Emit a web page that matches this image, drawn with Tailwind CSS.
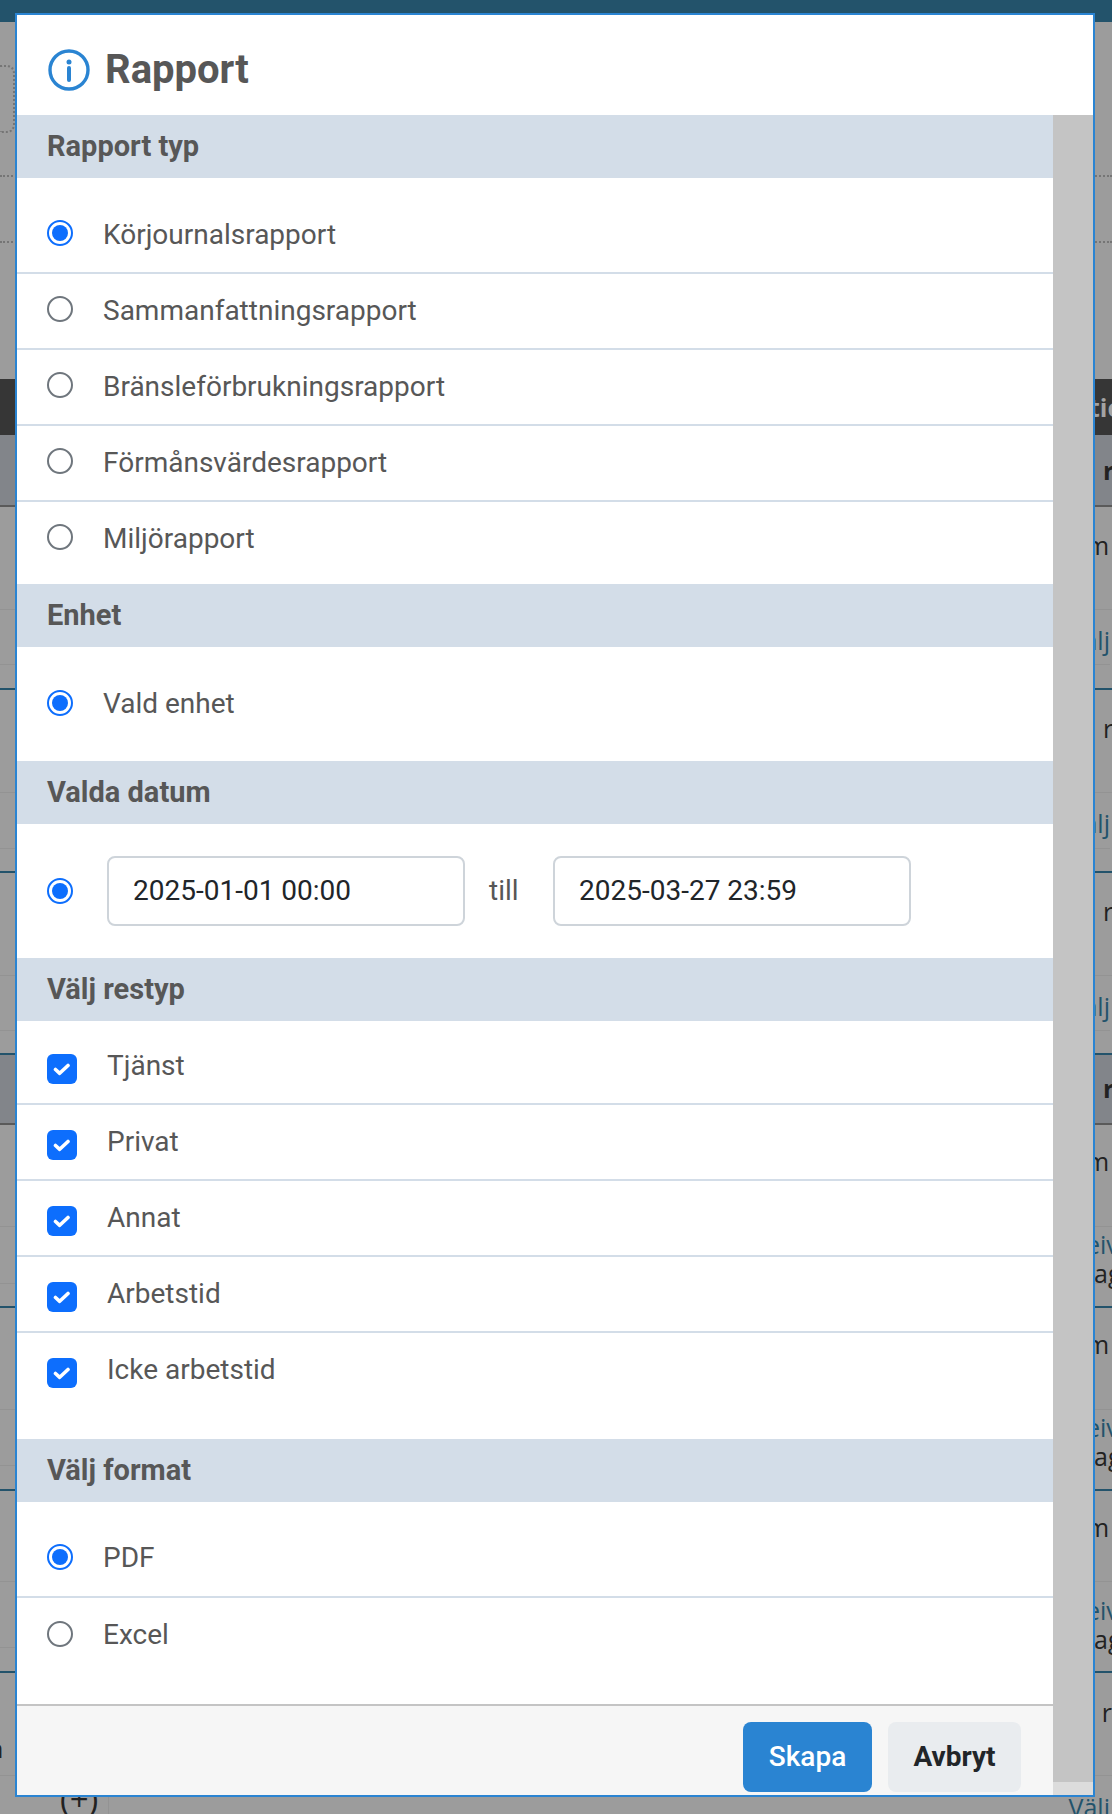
<!DOCTYPE html>
<html lang="sv">
<head>
    <meta charset="UTF-8">
    <meta name="viewport" content="width=device-width, initial-scale=1.0">
    <title>Rapport</title>
    <script src="https://cdn.jsdelivr.net/npm/@tailwindcss/browser@4"></script>
</head>
<body class="bg-[#9c9c9c]">
<div class="relative w-[1112px] h-[1814px] overflow-hidden font-['Roboto',sans-serif]">

    <!-- sidan bakom dialogen -->
    <div class="font-['Open_Sans',sans-serif] text-[25px] leading-[30px] text-[#222] whitespace-nowrap">
        <div class="h-[22px] bg-[#23536b]"></div>
        <div class="h-[155px] pt-[43px] border-b-2 border-dotted border-[#757575]">
            <div class="h-[68px] w-[15px] rounded-r-lg border-2 border-l-0 border-dotted border-[#757575]"></div>
        </div>
        <div class="h-[66px] border-b-2 border-dotted border-[#757575]"></div>
        <div class="h-[136px]"></div>
        <div class="h-[56px] bg-[#363636] pl-[1089px] pt-[13px] font-bold text-[#a3a3a3]">tic</div>
        <div class="h-[72px] bg-[#82858a] border-b-2 border-[#5a5a5a] pl-[1103px] pt-[20px] font-bold">r</div>

        <div class="h-[183px] border-b-2 border-[#23536b]">
            <div class="h-[103px] border-b border-[#939393] pl-[1086px] pt-[23px]">m</div>
            <div class="h-[55px] border-b border-[#939393] w-[1110px] text-right pt-[15px] text-[#23536b]">Välj</div>
        </div>
        <div class="h-[183px] border-b-2 border-[#23536b]">
            <div class="h-[103px] border-b border-[#939393] pl-[1103px] pt-[23px]">r</div>
            <div class="h-[56px] border-b border-[#939393] w-[1110px] text-right pt-[15px] text-[#23536b]">Välj</div>
        </div>
        <div class="h-[182px] border-b-2 border-[#23536b]">
            <div class="h-[103px] border-b border-[#939393] pl-[1103px] pt-[23px]">r</div>
            <div class="h-[55px] border-b border-[#939393] w-[1110px] text-right pt-[15px] text-[#23536b]">Välj</div>
        </div>
        <div class="h-[70px] bg-[#82858a] border-b-2 border-[#5a5a5a] pl-[1103px] pt-[18px] font-bold">r</div>

        <div class="h-[183px] border-b-2 border-[#23536b]">
            <div class="h-[102px] border-b border-[#939393] pl-[1086px] pt-[21px]">m</div>
            <div class="h-[57px] border-b border-[#939393] pl-[1086px] pt-[3px] leading-[29px]"><div class="text-[#23536b]">eiv</div><div class="pl-[8px]">ag</div></div>
        </div>
        <div class="h-[183px] border-b-2 border-[#23536b]">
            <div class="h-[102px] border-b border-[#939393] pl-[1086px] pt-[21px]">m</div>
            <div class="h-[56px] border-b border-[#939393] pl-[1086px] pt-[3px] leading-[29px]"><div class="text-[#23536b]">eiv</div><div class="pl-[8px]">ag</div></div>
        </div>
        <div class="h-[182px] border-b-2 border-[#23536b]">
            <div class="h-[91px] border-b border-[#939393] pl-[1086px] pt-[21px]">m</div>
            <div class="h-[66px] border-b border-[#939393] pl-[1086px] pt-[14px] leading-[29px]"><div class="text-[#23536b]">eiv</div><div class="pl-[8px]">ag</div></div>
        </div>
        <div class="h-[103px] border-b border-[#939393] pl-[1103px] pt-[24px]">
            <div class="flex justify-between">
                <span class="-ml-[1115px] mt-[36px]">n</span>
                <span>r</span>
            </div>
        </div>
        <div class="flex items-start w-[1110px] justify-between">
            <div class="w-[109px] h-[40px] border-r border-[#939393] pl-[60px] pt-[8px] text-[33px]">(+)</div>
            <div class="pt-[16px] text-[#23536b]">Välj</div>
        </div>
    </div>

    <!-- dialog -->
    <div class="absolute left-[15px] top-[13px] w-[1080px] h-[1784px] border-2 border-[#2a84d2] bg-white flex flex-col text-[#575757]">
        <div class="h-[100px] shrink-0 flex items-center pl-[31px] pt-[10px]">
            <svg width="42" height="42" viewBox="0 0 42 42" fill="none" stroke="#2a84d2" stroke-width="3.4">
                <circle cx="21" cy="21" r="19"/>
                <circle cx="21" cy="13" r="2.5" fill="#2a84d2" stroke="none"/>
                <path d="M21 19v12" stroke-width="4" stroke-linecap="round"/>
            </svg>
            <h1 class="ml-[15px] text-[40px] font-bold leading-none">Rapport</h1>
        </div>

        <div class="flex flex-1 min-h-0">
            <div class="w-[1036px] flex flex-col text-[28px]">
                <h2 class="h-[63px] shrink-0 bg-[#d3dde8] pl-[30px] flex items-center font-bold text-[29px]">Rapport typ</h2>
                <div class="pt-[20px] h-[406px] shrink-0">
                    <div class="h-[76px] pb-[4px] border-b-2 border-[#d3dde8] flex items-center pl-[30px]">
                        <span class="w-[26px] h-[26px] rounded-full border-2 border-[#0d6efd] flex items-center justify-center"><span class="w-[16px] h-[16px] rounded-full bg-[#0d6efd]"></span></span>
                        <span class="ml-[30px] mt-[3px]">Körjournalsrapport</span>
                    </div>
                    <div class="h-[76px] pb-[4px] border-b-2 border-[#d3dde8] flex items-center pl-[30px]">
                        <span class="w-[26px] h-[26px] rounded-full border-2 border-[#6f767d]"></span>
                        <span class="ml-[30px] mt-[3px]">Sammanfattningsrapport</span>
                    </div>
                    <div class="h-[76px] pb-[4px] border-b-2 border-[#d3dde8] flex items-center pl-[30px]">
                        <span class="w-[26px] h-[26px] rounded-full border-2 border-[#6f767d]"></span>
                        <span class="ml-[30px] mt-[3px]">Bränsleförbrukningsrapport</span>
                    </div>
                    <div class="h-[76px] pb-[4px] border-b-2 border-[#d3dde8] flex items-center pl-[30px]">
                        <span class="w-[26px] h-[26px] rounded-full border-2 border-[#6f767d]"></span>
                        <span class="ml-[30px] mt-[3px]">Förmånsvärdesrapport</span>
                    </div>
                    <div class="h-[76px] pb-[6px] flex items-center pl-[30px]">
                        <span class="w-[26px] h-[26px] rounded-full border-2 border-[#6f767d]"></span>
                        <span class="ml-[30px] mt-[3px]">Miljörapport</span>
                    </div>
                </div>

                <h2 class="h-[63px] shrink-0 bg-[#d3dde8] pl-[30px] flex items-center font-bold text-[29px]">Enhet</h2>
                <div class="h-[114px] shrink-0 pt-[20px]">
                    <div class="h-[76px] pb-[4px] flex items-center pl-[30px]">
                        <span class="w-[26px] h-[26px] rounded-full border-2 border-[#0d6efd] flex items-center justify-center"><span class="w-[16px] h-[16px] rounded-full bg-[#0d6efd]"></span></span>
                        <span class="ml-[30px] mt-[2px]">Vald enhet</span>
                    </div>
                </div>

                <h2 class="h-[63px] shrink-0 bg-[#d3dde8] pl-[30px] flex items-center font-bold text-[29px]">Valda datum</h2>
                <div class="h-[134px] shrink-0 pl-[30px] flex items-center">
                    <span class="w-[26px] h-[26px] rounded-full border-2 border-[#0d6efd] flex items-center justify-center"><span class="w-[16px] h-[16px] rounded-full bg-[#0d6efd]"></span></span>
                    <input type="text" value="2025-01-01 00:00" class="ml-[34px] w-[358px] h-[70px] border-2 border-[#ced4da] rounded-lg pl-[24px] pb-[2px] text-[#212529] text-[28px]">
                    <span class="ml-[24px] w-[64px]">till</span>
                    <input type="text" value="2025-03-27 23:59" class="w-[358px] h-[70px] border-2 border-[#ced4da] rounded-lg pl-[24px] pb-[2px] text-[#212529] text-[28px]">
                </div>

                <h2 class="h-[63px] shrink-0 bg-[#d3dde8] pl-[30px] flex items-center font-bold text-[29px]">Välj restyp</h2>
                <div class="h-[418px] shrink-0">
                    <div class="h-[84px] pt-[33px] border-b-2 border-[#d3dde8] flex items-start pl-[30px]">
                        <span class="w-[30px] h-[30px] rounded-md bg-[#0d6efd] flex items-center justify-center"><svg width="18" height="18" viewBox="0 0 18 18" fill="none" stroke="#fff" stroke-width="3.6" stroke-linecap="round" stroke-linejoin="round"><path d="M2.5 9.5l4.2 3.8 8.3-7.8"/></svg></span>
                        <span class="ml-[30px] -mt-[6px] leading-[36px]">Tjänst</span>
                    </div>
                    <div class="h-[76px] pt-[25px] border-b-2 border-[#d3dde8] flex items-start pl-[30px]">
                        <span class="w-[30px] h-[30px] rounded-md bg-[#0d6efd] flex items-center justify-center"><svg width="18" height="18" viewBox="0 0 18 18" fill="none" stroke="#fff" stroke-width="3.6" stroke-linecap="round" stroke-linejoin="round"><path d="M2.5 9.5l4.2 3.8 8.3-7.8"/></svg></span>
                        <span class="ml-[30px] -mt-[6px] leading-[36px]">Privat</span>
                    </div>
                    <div class="h-[76px] pt-[25px] border-b-2 border-[#d3dde8] flex items-start pl-[30px]">
                        <span class="w-[30px] h-[30px] rounded-md bg-[#0d6efd] flex items-center justify-center"><svg width="18" height="18" viewBox="0 0 18 18" fill="none" stroke="#fff" stroke-width="3.6" stroke-linecap="round" stroke-linejoin="round"><path d="M2.5 9.5l4.2 3.8 8.3-7.8"/></svg></span>
                        <span class="ml-[30px] -mt-[6px] leading-[36px]">Annat</span>
                    </div>
                    <div class="h-[76px] pt-[25px] border-b-2 border-[#d3dde8] flex items-start pl-[30px]">
                        <span class="w-[30px] h-[30px] rounded-md bg-[#0d6efd] flex items-center justify-center"><svg width="18" height="18" viewBox="0 0 18 18" fill="none" stroke="#fff" stroke-width="3.6" stroke-linecap="round" stroke-linejoin="round"><path d="M2.5 9.5l4.2 3.8 8.3-7.8"/></svg></span>
                        <span class="ml-[30px] -mt-[6px] leading-[36px]">Arbetstid</span>
                    </div>
                    <div class="h-[106px] pt-[25px] flex items-start pl-[30px]">
                        <span class="w-[30px] h-[30px] rounded-md bg-[#0d6efd] flex items-center justify-center"><svg width="18" height="18" viewBox="0 0 18 18" fill="none" stroke="#fff" stroke-width="3.6" stroke-linecap="round" stroke-linejoin="round"><path d="M2.5 9.5l4.2 3.8 8.3-7.8"/></svg></span>
                        <span class="ml-[30px] -mt-[6px] leading-[36px]">Icke arbetstid</span>
                    </div>
                </div>

                <h2 class="h-[63px] shrink-0 bg-[#d3dde8] pl-[30px] flex items-center font-bold text-[29px]">Välj format</h2>
                <div class="h-[202px] shrink-0 pt-[20px]">
                    <div class="h-[76px] pb-[4px] border-b-2 border-[#d3dde8] flex items-center pl-[30px]">
                        <span class="w-[26px] h-[26px] rounded-full border-2 border-[#0d6efd] flex items-center justify-center"><span class="w-[16px] h-[16px] rounded-full bg-[#0d6efd]"></span></span>
                        <span class="ml-[30px] mt-[2px]">PDF</span>
                    </div>
                    <div class="h-[76px] pb-[4px] flex items-center pl-[30px]">
                        <span class="w-[26px] h-[26px] rounded-full border-2 border-[#6f767d]"></span>
                        <span class="ml-[30px] mt-[2px]">Excel</span>
                    </div>
                </div>

                <div class="flex-1 bg-[#f6f6f6] border-t-2 border-[#c4c4c4] flex justify-end items-start pt-[16px] pr-[32px] gap-[16px]">
                    <button class="w-[129px] h-[70px] rounded-lg bg-[#2a84d2] text-white font-medium text-[28px]">Skapa</button>
                    <button class="w-[133px] h-[70px] rounded-lg bg-[#e9ecef] text-[#212529] font-bold text-[28px]">Avbryt</button>
                </div>
            </div>
            <!-- rullningslist -->
            <div class="w-[40px] flex flex-col">
                <div class="flex-1 bg-[#c4c4c4]"></div>
                <div class="h-[13px] bg-[#dcdcdc]"></div>
            </div>
        </div>
    </div>
</div>
</body>
</html>
